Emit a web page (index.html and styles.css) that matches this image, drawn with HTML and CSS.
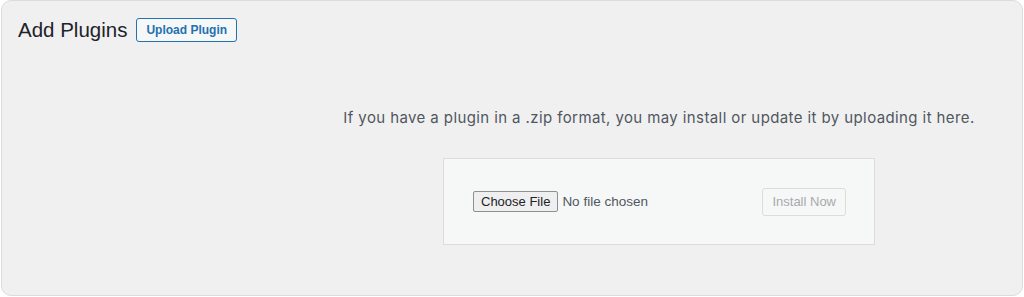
FILE: index.html
```html
<!DOCTYPE html>
<html>
<head>
    <meta charset="UTF-8">
    <title>Add Plugins</title>
    <link rel="stylesheet" href="styles.css">
</head>
<body>
    <div class="frame">
        <div class="page-header">
            <h1>Add Plugins</h1>
            <a class="upload-toggle" href="#">Upload Plugin</a>
        </div>

        <!-- Upload form -->
        <div class="upload-plugin">
            <p class="install-help">If you have a plugin in a .zip format, you may install or update it by uploading it here.</p>
            <form class="upload-form">
                <input type="file" id="pluginzip" name="pluginzip">
                <button type="submit" class="install-btn" disabled>Install Now</button>
            </form>
        </div>
    </div>
</body>
</html>
```

FILE: styles.css
```css
body {
    margin: 0;
    background: #fff;
    font-family: "Liberation Sans", Arial, sans-serif;
}
.frame {
    box-sizing: border-box;
    height: 296px;
    margin: 0 1px;
    background: #f0f0f1;
    border: 1px solid #dcdcde;
    border-radius: 10px;
}
.page-header {
    display: flex;
    align-items: center;
    gap: 9px;
    padding: 17px 0 0 16px;
}
h1 {
    margin: 0;
    font-size: 20.5px;
    font-weight: 400;
    line-height: 24px;
    color: #1d2327;
}
.upload-toggle {
    display: inline-block;
    padding: 0 9px;
    font-size: 12px;
    font-weight: 700;
    line-height: 22px;
    color: #2271b1;
    text-decoration: none;
    background: #f6f7f7;
    border: 1px solid #2271b1;
    border-radius: 3px;
}
.upload-plugin {
    display: flex;
    flex-direction: column;
    align-items: center;
    padding-left: 294px;
}
.install-help {
    margin: 67px 0 0;
    font-family: Inter, "Liberation Sans", sans-serif;
    font-size: 15px;
    letter-spacing: 0.4px;
    line-height: 18px;
    color: #50575e;
    white-space: nowrap;
}
.upload-form {
    box-sizing: border-box;
    display: flex;
    align-items: center;
    justify-content: space-between;
    width: 432px;
    height: 87px;
    margin-top: 31px;
    padding: 0 28px 0 29px;
    background: #f6f7f7;
    border: 1px solid #dcdcde;
}
input[type="file"] {
    font-family: "Liberation Sans", Arial, sans-serif;
    font-size: 13.5px;
    color: #50575e;
}
input[type="file"]::file-selector-button {
    height: 21px;
    margin-right: 4px;
    padding: 0 7px;
    font-family: "Liberation Sans", Arial, sans-serif;
    font-size: 13px;
    color: #1d2327;
    background: #efefef;
    border: 1px solid #8c8f94;
    border-radius: 2px;
}
.install-btn {
    height: 28px;
    padding: 0 9px;
    font-family: "Liberation Sans", Arial, sans-serif;
    font-size: 13px;
    color: #a7aaad;
    background: #f6f7f7;
    border: 1px solid #dcdcde;
    border-radius: 3px;
}
```
